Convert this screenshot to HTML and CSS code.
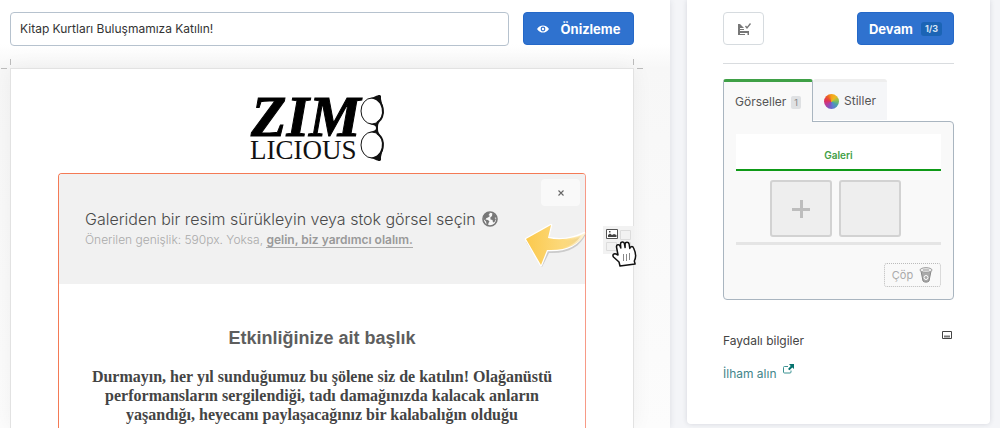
FILE: index.html
```html
<!DOCTYPE html>
<html lang="tr">
<head>
<meta charset="utf-8">
<meta name="viewport" content="width=device-width, initial-scale=1">
<title>Kitap Kurtları Buluşmamıza Katılın!</title>
<link rel="stylesheet" href="styles.css">
</head>
<body>
<div class="app">
  <main class="editor">
    <header class="topbar">
      <input class="subject" type="text" aria-label="Konu" value="Kitap Kurtları Buluşmamıza Katılın!">
      <button class="primary preview" type="button">
        <svg class="eye" viewBox="0 0 12 8" aria-hidden="true"><path fill="#fff" fill-rule="evenodd" d="M0 4C2 1.200 3.800.4 6 .4S10 1.200 12 4C10 6.800 8.200 7.600 6 7.600S2 6.800 0 4zm6-2.400a2.400 2.400 0 1 0 0 4.800 2.400 2.400 0 0 0 0-4.800z"/><circle cx="6" cy="4" r="1.200" fill="#fff"/></svg>
        <span>Önizleme</span>
      </button>
    </header>
    <div class="stage">
      <article class="sheet">
        <span class="crop crop-left" aria-hidden="true"></span>
        <span class="crop crop-right" aria-hidden="true"></span>
        <svg class="logo" viewBox="0 -14 136 90" role="img" aria-label="Zim Licious">
          <text class="logo-top" x="2" y="42">ZIM</text>
          <text class="logo-bottom" x="1" y="65">LICIOUS</text>
          <g fill="none" stroke="#111">
            <ellipse cx="123" cy="17" rx="11" ry="13"/>
            <ellipse cx="123" cy="51" rx="11" ry="13"/>
            <path stroke-width="2" d="M129 6c5 4 6 12 4 17-1 3-3 4-5 6M129 62c5-4 6-12 4-17-1-3-3-4-5-6"/>
          </g>
          <path fill="#111" d="M121 4c5-.5 6-3 10-3l1 1v3l2 9c-3-6-7-9-13-10zM121 64c5 .5 6 3 10 3l1-1v-3l2-9c-3 6-7 9-13 10z"/>
          <path fill="#111" d="M120 30c4 .3 8-.5 11-3-2 3-2 4-2 7s0 4 2 7c-3-2.500-7-3.300-11-3 4-1 7-1 7-4s-3-3-7-4z"/>
        </svg>
        <section class="block">
          <div class="drop">
            <button class="close" type="button" aria-label="Kapat"><svg viewBox="0 0 8 8" aria-hidden="true"><path d="M1.500 1.500l5 5m0-5l-5 5" stroke="#666" stroke-width="1.100"/></svg></button>
            <p class="drop-title">Galeriden bir resim sürükleyin veya stok görsel seçin
              <svg class="globe" viewBox="0 0 16 16" aria-hidden="true"><circle cx="8" cy="8" r="7" fill="#f7f7f7" stroke="#777" stroke-width="1.600"/><path fill="#777" d="M1.500 5L4 2l3-1 .8 1.500L6.500 4 8 5 6 6.500 4.500 7 3.500 8.500 6 9l1.500 1.500-1 1.500L6 14.500 4.500 13 4 10.500 1.500 8zM10.500 1.500L13.500 4l1.200 3-1.200-.5-1 .5 1.500 1-1.500 3-1.500.5-.5-2.500-2-.5-.2-2L10 5z"/></svg>
            </p>
            <p class="drop-hint">Önerilen genişlik: 590px. Yoksa, <a class="help" href="#">gelin, biz yardımcı olalım.</a></p>
            <svg class="arrow" viewBox="0 0 64 46" aria-hidden="true">
              <defs><linearGradient id="gold" x1="0" x2="1"><stop offset="0" stop-color="#fbc94d"/><stop offset=".6" stop-color="#fcd97c"/><stop offset="1" stop-color="#fcd97c" stop-opacity=".2"/></linearGradient></defs>
              <path d="M2 18L27 3l-2 13c14 3 26 1 37-6-6 13-18 20-37 19l-7 14z" fill="#bbb" opacity=".7"/>
              <path d="M2 15L27 1l-3 13c14 3 26 0 36-5-6 12-18 18-37 17l-6 15z" fill="url(#gold)" stroke="#fff" stroke-width="2.500" stroke-linejoin="round"/>
              <path d="M2 15L27 1l-3 13c14 3 28 0 39-6-8 13-21 19-40 18l-6 15z" fill="url(#gold)"/>
            </svg>
          </div>
          <h1 class="headline">Etkinliğinize ait başlık</h1>
          <p class="copy">Durmayın, her yıl sunduğumuz bu şölene siz de katılın! Olağanüstü<br>performansların sergilendiği, tadı damağınızda kalacak anların<br>yaşandığı, heyecanı paylaşacağınız bir kalabalığın olduğu</p>
        </section>
        <svg class="dragged" viewBox="0 0 36 42" aria-hidden="true">
          <path fill="#f2f2f2" d="M0 0h31v28H0z"/>
          <path fill="none" stroke="#dcdcdc" d="M17.500 4.500h10v9h-10zM3.500 16.500h10v8h-10zM17.500 16.500h10v8h-10z"/>
          <path fill="#fff" stroke="#555" d="M3.500 3.500h11v9h-11z"/><path fill="#444" d="M5 11V9l2-1.500L9 9l2-1 2.500 1v2zM6 5h1.500v1.500H6z"/>
          <path fill="#fff" stroke="#111" stroke-width="1.500" stroke-linejoin="round" d="M17 40l-1-4-5.500-5c-1.500-2 .5-4 2.500-3l2 1-1.500-8c-.3-2.500 2.800-3 3.500-1l.8 2-.3-4c0-2.500 3.200-2.800 3.900-.5l.7 4v-3.500c.3-2.300 3.400-2.300 4 0l.7 4.500c.2-2.200 3-2.600 3.800-.5 1.900 4 3 9 .7 13l.8 3z"/>
          <path stroke="#888" d="M20.500 28v7M23.500 28v7M26.500 27v7"/>
        </svg>
      </article>
    </div>
  </main>
  <aside class="side">
    <div class="side-actions">
      <button class="icon-button" type="button" aria-label="Kontrol"><svg viewBox="0 0 14 14" aria-hidden="true"><path fill="#777" d="M1 2h2l4 4v2H3v1h9v4h-1.500v-2H3v1h5v1H1z"/><path fill="none" stroke="#777" stroke-width="1.300" d="M8.500 4l1.500 2L13.500 1.500"/><path stroke="#fff" d="M3 6.500h4"/></svg></button>
      <button class="primary next" type="button"><span>Devam</span><span class="step">1/3</span></button>
    </div>
    <hr class="rule">
    <div class="tabs" role="tablist">
      <button class="tab tab-on" type="button" role="tab" aria-selected="true">Görseller <span class="count">1</span></button>
      <button class="tab" type="button" role="tab" aria-selected="false"><span class="wheel"></span>Stiller</button>
    </div>
    <section class="panel">
      <h2 class="gallery-title">Galeri</h2>
      <div class="thumbs">
        <button class="thumb" type="button" aria-label="Resim ekle"><svg viewBox="0 0 18 18" aria-hidden="true"><path fill="#bdbdbd" d="M8 0h3v8h7v3h-7v7H8v-7H0V8h8z"/></svg></button>
        <button class="thumb" type="button" aria-label="Boş resim"></button>
      </div>
      <div class="trash-row">
        <button class="trash" type="button">Çöp
          <svg viewBox="0 0 14 16" aria-hidden="true"><path fill="#aaa" stroke="#888" d="M2 4l2 10c1 1.500 5 1.500 6 0l2-10z"/><ellipse cx="7" cy="3" rx="6" ry="2.300" fill="#eee" stroke="#999"/><path stroke="#999" d="M4 3h6"/><circle cx="7" cy="10.500" r="2" fill="none" stroke="#fff"/></svg>
        </button>
      </div>
    </section>
    <div class="tips">
      <span>Faydalı bilgiler</span>
      <button class="collapse" type="button" aria-label="Küçült"><svg viewBox="0 0 10 8" aria-hidden="true"><path fill="#fff" stroke="#444" d="M.5.5h9v7h-9z"/><path fill="#777" d="M2 4.500h6v2H2z"/></svg></button>
    </div>
    <a class="inspire" href="#">İlham alın
      <svg viewBox="0 0 11 11" aria-hidden="true"><path fill="none" stroke="#3b9292" d="M5 2.500H1.500a1 1 0 0 0-1 1V8a1 1 0 0 0 1 1H7a1 1 0 0 0 1-1V6.500"/><path fill="#08736f" d="M6 0h5v5L9.300 3.500 6.500 6.300 5 5l2.700-3z"/></svg>
    </a>
  </aside>
</div>
</body>
</html>
```
FILE: styles.css
```css
* { box-sizing: border-box; }
body {
  margin: 0;
  background: #f4f5f8;
  color: #444;
  font: 13px/20px Inter, "Noto Sans", sans-serif;
}
button { font: inherit; color: inherit; cursor: pointer; padding: 0; }
svg { display: block; flex: none; }
.app { display: flex; height: 100vh; overflow: hidden; gap: 17px; padding-right: 10px; }

.editor {
  flex: 1;
  min-width: 0;
  display: flex;
  flex-direction: column;
  background: linear-gradient(#fff, #fff 44px, #f7f7f7 68px, #fcfcfc);
  box-shadow: 0 0 6px rgba(40, 50, 70, .12);
}
.topbar { display: flex; gap: 14px; padding: 12px 36px 0 10px; }
.subject {
  flex: 1;
  min-width: 0;
  height: 34px;
  padding: 0 9px 1px;
  border: 1px solid #b6c2ce;
  border-radius: 4px;
  background: #fff;
  color: #333;
  font: 12px/20px Inter, "Noto Sans", sans-serif;
}
.primary {
  display: flex;
  align-items: center;
  justify-content: center;
  height: 33px;
  border: 1px solid #2468c8;
  border-radius: 4px;
  background: #2f72cf;
  color: #fff;
  font-size: 13px;
  font-weight: 700;
}
.preview { width: 111px; gap: 12px; }
.eye { width: 12px; height: 8px; }

.stage { flex: 1; padding: 22px 36px 0 10px; }
.sheet {
  position: relative;
  display: flex;
  flex-direction: column;
  align-items: center;
  height: 100%;
  padding: 11px 47px 0;
  border: 1px solid #e2e2e2;
  border-bottom: 0;
  background: #fff;
  box-shadow: 0 0 20px rgba(0, 0, 0, .05);
}
.crop { position: absolute; top: -10px; width: 10px; height: 10px; }
.crop::before, .crop::after { content: ""; position: absolute; background: #bbb; }
.crop::before { top: 0; width: 1px; height: 6px; }
.crop::after { bottom: 0; width: 6px; height: 1px; }
.crop-left { left: -10px; }
.crop-left::before { right: 0; }
.crop-left::after { left: 0; }
.crop-right { right: -10px; }
.crop-right::before { left: 0; }
.crop-right::after { right: 0; }

.logo { width: 136px; height: 90px; margin-right: 10px; }
.logo-top { font: italic 700 58px "Liberation Serif", serif; fill: #000; stroke: #000; stroke-width: 1px; }
.logo-bottom { font: 27px "Liberation Serif", serif; fill: #111; }

.block {
  align-self: stretch;
  flex: 1;
  margin-top: 3px;
  border: 1px solid #f47a55;
  border-right-color: #f79a86;
  border-bottom: 0;
  border-radius: 4px 4px 0 0;
}
.drop {
  position: relative;
  padding: 34px 26px;
  border-radius: 3px 3px 0 0;
  background: #f1f1f1;
  color: #4a4a4a;
}
.drop p { margin: 0; }
.drop-title { display: flex; align-items: center; gap: 6px; font: 300 16px/22px Inter, "Noto Sans", sans-serif; white-space: nowrap; }
.globe { width: 16px; height: 16px; }
.drop-hint { color: #aaa; font: 300 12px/20px Inter, "Noto Sans", sans-serif; }
.help { color: #999; font-weight: 600; text-decoration: none; border-bottom: 1px solid #aaa; }
.close {
  position: absolute;
  top: 5px;
  right: 5px;
  width: 39px;
  height: 27px;
  display: grid;
  place-items: center;
  border: 0;
  border-radius: 4px;
  background: #f9f9f9;
}
.close svg { width: 8px; height: 8px; }
.arrow { position: absolute; right: -3px; top: 50px; width: 64px; height: 46px; }
.headline {
  margin: 42px 0 0;
  color: #5e5e5e;
  font: 700 18px/24px "Liberation Sans", sans-serif;
  text-align: center;
}
.copy {
  margin: 17px 0 0;
  color: #444;
  font: 700 16px/19px "Liberation Serif", serif;
  text-align: center;
  white-space: nowrap;
}
.dragged { position: absolute; right: -6px; top: 157px; width: 36px; height: 42px; }

.side {
  flex: none;
  width: 303px;
  height: 424px;
  padding: 12px 36px 0;
  border-radius: 0 0 4px 4px;
  background: #fff;
  box-shadow: 0 0 5px rgba(40, 50, 70, .15);
}
.side-actions { display: flex; justify-content: space-between; }
.icon-button {
  display: grid;
  place-items: center;
  width: 41px;
  height: 33px;
  border: 1px solid #d6dbdf;
  border-radius: 4px;
  background: #fff;
}
.icon-button svg { width: 14px; height: 14px; }
.next { width: 97px; gap: 8px; }
.step {
  padding: 0 4px;
  border-radius: 3px;
  background: #1b64b5;
  color: #d5e3f4;
  font-size: 9px;
  line-height: 14px;
}
.rule { margin: 18px 0 15px; border: 0; border-top: 1px solid #d9dcdf; }
.tabs { display: flex; align-items: flex-start; }
.tab {
  display: flex;
  align-items: center;
  justify-content: center;
  gap: 5px;
  width: 74px;
  height: 41px;
  border: 0;
  border-top: 3px solid #eee;
  border-radius: 3px 3px 0 0;
  background: #f5f6f8;
  color: #555;
  font-size: 12px;
}
.tab-on {
  z-index: 1;
  width: 90px;
  height: 43px;
  margin-bottom: -1px;
  border: 1px solid #a9b5c0;
  border-top: 3px solid #3fa046;
  border-bottom: 0;
  background: #f9f9f9;
}
.count {
  padding: 0 3px;
  border-radius: 2px;
  background: #dfe1e3;
  color: #888;
  font-size: 9px;
  line-height: 13px;
}
.wheel {
  width: 15px;
  height: 15px;
  border-radius: 50%;
  background: conic-gradient(#f5a21b, #f0b71f, #8cc152, #4aa3a5, #5b7fd0, #7d56c0, #b93b9a, #e0315a, #ea5b26, #f5a21b);
}
.panel {
  padding: 12px;
  border: 1px solid #a9b5c0;
  border-radius: 0 4px 4px 4px;
  background: #f9f9f9;
}
.gallery-title {
  margin: 0;
  padding: 11px 0 4px;
  border-bottom: 2px solid #0e9a17;
  background: #fff;
  color: #42a046;
  font: 600 10px/20px Inter, "Noto Sans", sans-serif;
  text-align: center;
}
.thumbs {
  display: flex;
  justify-content: center;
  gap: 7px;
  padding: 9px 6px 5px 0;
  border-bottom: 3px solid #e5e5e5;
}
.thumb {
  display: grid;
  place-items: center;
  width: 62px;
  height: 57px;
  border: 2px solid #d2d2d2;
  border-radius: 3px;
  background: #eee;
}
.thumb svg { width: 18px; height: 18px; }
.trash-row { display: flex; justify-content: flex-end; padding-top: 18px; }
.trash {
  display: flex;
  align-items: center;
  justify-content: center;
  gap: 6px;
  width: 57px;
  height: 24px;
  border: 1px dotted #bbb;
  border-radius: 3px;
  background: #f9f9f9;
  color: #aaa;
  font-size: 11px;
}
.trash svg { width: 14px; height: 16px; }
.tips { display: flex; justify-content: space-between; margin-top: 31px; font-size: 12px; }
.collapse { display: block; height: 8px; margin-right: 2px; border: 0; background: none; }
.collapse svg { width: 10px; height: 8px; }
.inspire {
  display: inline-flex;
  gap: 6px;
  margin-top: 13px;
  color: #42858a;
  font-size: 12px;
  text-decoration: none;
}
.inspire svg { width: 11px; height: 11px; }
```
